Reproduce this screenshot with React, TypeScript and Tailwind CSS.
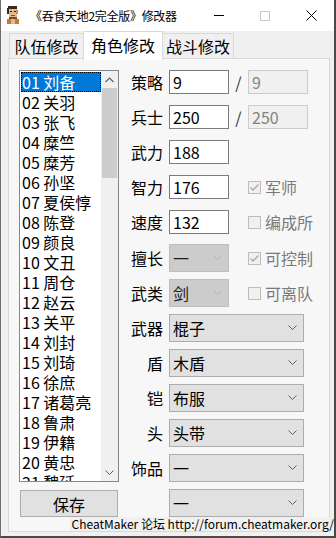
import React from "react";

const names = [
  "刘备", "关羽", "张飞", "糜竺", "糜芳", "孙坚", "夏侯惇", "陈登", "颜良", "文丑",
  "周仓", "赵云", "关平", "刘封", "刘琦", "徐庶", "诸葛亮", "鲁肃", "伊籍", "黄忠", "魏延",
];

const font = { fontFamily: "'Noto Sans CJK SC', 'Noto Sans', sans-serif" };

function Chevron({ light }: { light?: boolean }) {
  return (
    <svg width="9" height="6" viewBox="0 0 9 6" className="shrink-0">
      <path d="M0.5 0.5 L4.5 4.5 L8.5 0.5" fill="none" stroke={light ? "#b5b5b5" : "#5f5f5f"} strokeWidth="1" />
    </svg>
  );
}

function Label({ text }: { text: string }) {
  return <div className="w-[36px] text-right text-[16px] leading-[20px] text-black pr-[2px]">{text}</div>;
}

function TextBox({ value, disabled }: { value: string; disabled?: boolean }) {
  return (
    <div
      className={
        disabled
          ? "w-[60px] h-[24px] border border-[#cccccc] bg-[#f0f0f0] text-[#838383] text-[16px] leading-[22px] pl-[3px]"
          : "w-[60px] h-[24px] border border-[#7a7a7a] bg-white text-black text-[16px] leading-[22px] pl-[3px]"
      }
    >
      {value}
    </div>
  );
}

function Select({ value, disabled, wide }: { value: string; disabled?: boolean; wide?: boolean }) {
  return (
    <div
      className={
        (wide ? "w-[135px] " : "w-[60px] ") +
        (disabled
          ? "h-[28px] -mt-px border border-[#bfbfbf] bg-[#cccccc] flex items-center justify-between pl-[3px] pr-[6px] text-[16px] leading-[20px] text-[#1a1a1a]"
          : "h-[28px] -mt-px border border-[#adadad] bg-[#e1e1e1] flex items-center justify-between pl-[3px] pr-[6px] text-[16px] leading-[20px] text-black")
      }
    >
      <span>{value}</span>
      <Chevron light={disabled} />
    </div>
  );
}

function Check({ checked, text }: { checked?: boolean; text: string }) {
  return (
    <div className="flex items-center gap-[4px] ml-[15px]">
      <div className="w-[13px] h-[13px] border border-[#bcbcbc] bg-[#f0f0f0] flex items-center justify-center">
        {checked && (
          <svg width="11" height="11" viewBox="0 0 11 11">
            <path d="M1.5 5.5 L4 8 L9.5 2.5" fill="none" stroke="#a8a8a8" strokeWidth="1.3" />
          </svg>
        )}
      </div>
      <span className="text-[16px] leading-[20px] text-[#7a7a7a]">{text}</span>
    </div>
  );
}

function Row({ children }: { children: React.ReactNode }) {
  return <div className="h-[35px] flex items-start gap-[4px]">{children}</div>;
}

function Center({ h, children }: { h: number; children: React.ReactNode }) {
  return (
    <div className={h === 24 ? "h-[24px] flex items-center" : "h-[26px] flex items-center"}>{children}</div>
  );
}

function Icon() {
  return (
    <svg width="16" height="18" viewBox="0 0 16 18" shapeRendering="crispEdges">
      <rect x="3" y="0" width="9" height="3" fill="#3b2a1a" />
      <rect x="2" y="2" width="3" height="6" fill="#3b2a1a" />
      <rect x="4" y="3" width="8" height="8" fill="#e7b98a" />
      <rect x="5" y="5" width="2" height="1" fill="#2a1a0e" />
      <rect x="9" y="5" width="2" height="1" fill="#2a1a0e" />
      <rect x="6" y="9" width="4" height="1" fill="#8a4a2a" />
      <rect x="4" y="11" width="8" height="2" fill="#7a4a26" />
      <rect x="2" y="13" width="12" height="5" fill="#c07a3a" />
      <rect x="6" y="13" width="4" height="5" fill="#e7b98a" />
      <rect x="11" y="4" width="2" height="4" fill="#c98d5c" />
    </svg>
  );
}

export default function App() {
  return (
    <div
      className="relative w-[336px] h-[538px] bg-[#f0f0f0] border-l border-l-[#6e6e6e] border-r-2 border-r-[#4a4a4a] border-b-2 border-b-[#4a4a4a] overflow-hidden"
      style={font}
    >
      {/* Title bar */}
      <div className="h-[31px] bg-white flex items-center">
        <div className="ml-[4px] mt-[-2px]">
          <Icon />
        </div>
        <div className="ml-[9px] text-[12px] leading-[16px] text-black tracking-[-0.3px]">《吞食天地2完全版》修改器</div>
        <div className="flex-1" />
        <div className="w-[46px] h-[31px] flex items-center justify-center">
          <div className="w-[10px] h-px bg-black" />
        </div>
        <div className="w-[46px] h-[31px] flex items-center justify-center">
          <div className="w-[10px] h-[10px] border border-[#c6c6c6]" />
        </div>
        <div className="w-[46px] h-[31px] flex items-center justify-center">
          <svg width="11" height="11" viewBox="0 0 11 11">
            <path d="M0.5 0.5 L10.5 10.5 M10.5 0.5 L0.5 10.5" stroke="#000" strokeWidth="1" />
          </svg>
        </div>
      </div>

      {/* Tabs */}
      <div className="relative h-[27px] ml-[7px] flex items-end">
        <div className="h-[25px] w-[75px] ml-[1px] border border-[#d9d9d9] border-b-0 bg-[#f0f0f0] flex items-center justify-center text-[16px] leading-[20px] text-black">
          队伍修改
        </div>
        <div className="relative z-10 h-[29px] -mb-[2px] w-[80px] -ml-px border border-[#d9d9d9] border-b-0 bg-white flex items-center justify-center text-[16px] leading-[20px] text-black pb-[2px]">
          角色修改
        </div>
        <div className="h-[25px] w-[72px] -ml-px border border-[#d9d9d9] border-b-0 bg-[#f0f0f0] flex items-center justify-center text-[16px] leading-[20px] text-black">
          战斗修改
        </div>
      </div>

      {/* Panel */}
      <div className="ml-[7px] w-[322px] h-[474px] border border-[#d9d9d9] bg-[#f7f7f7] flex pl-[10px] pt-[11px]">
        {/* Left column */}
        <div className="flex flex-col w-[100px]">
          <div className="h-[412px] w-[100px] border border-[#828790] bg-white flex overflow-hidden">
            <div className="w-[81px] pt-px overflow-hidden">
              {names.map((n, i) => {
                const num = String(i + 1).padStart(2, "0");
                const sel = i === 0;
                return (
                  <div
                    key={num}
                    className={
                      sel
                        ? "h-[20px] ml-px bg-[#0078d7] text-white text-[16px] leading-[20px] pl-px outline-1 outline-dotted outline-[#000] -outline-offset-1 whitespace-nowrap"
                        : "h-[20px] ml-px text-black text-[16px] leading-[20px] pl-px whitespace-nowrap"
                    }
                  >
                    {num} {n}
                  </div>
                );
              })}
            </div>
            <div className="w-[17px] bg-[#f0f0f0] flex flex-col items-center">
              <div className="h-[17px] w-[17px] flex items-center justify-center">
                <svg width="9" height="6" viewBox="0 0 9 6">
                  <path d="M0.5 5 L4.5 1 L8.5 5" fill="none" stroke="#606060" strokeWidth="1.2" />
                </svg>
              </div>
              <div className="w-[15px] h-[90px] bg-[#cdcdcd]" />
              <div className="flex-1" />
              <div className="h-[17px] w-[17px] flex items-center justify-center">
                <Chevron />
              </div>
            </div>
          </div>
          <div className="mt-[8px] ml-px w-[98px] h-[27px] border border-[#adadad] bg-[#e1e1e1] flex items-center justify-center text-[16px] leading-[20px] text-black">
            保存
          </div>
        </div>

        {/* Right column */}
        <div className="ml-[10px] flex flex-col">
          <Row>
            <Center h={24}><Label text="策略" /></Center>
            <TextBox value="9" />
            <div className="w-[11px] h-[24px] flex items-center justify-center text-[16px] text-[#333]">/</div>
            <TextBox value="9" disabled />
          </Row>
          <Row>
            <Center h={24}><Label text="兵士" /></Center>
            <TextBox value="250" />
            <div className="w-[11px] h-[24px] flex items-center justify-center text-[16px] text-[#333]">/</div>
            <TextBox value="250" disabled />
          </Row>
          <Row>
            <Center h={24}><Label text="武力" /></Center>
            <TextBox value="188" />
          </Row>
          <Row>
            <Center h={24}><Label text="智力" /></Center>
            <TextBox value="176" />
            <Center h={24}><Check checked text="军师" /></Center>
          </Row>
          <Row>
            <Center h={24}><Label text="速度" /></Center>
            <TextBox value="132" />
            <Center h={24}><Check text="编成所" /></Center>
          </Row>
          <Row>
            <Center h={26}><Label text="擅长" /></Center>
            <Select value="一" disabled />
            <Center h={26}><Check checked text="可控制" /></Center>
          </Row>
          <Row>
            <Center h={26}><Label text="武类" /></Center>
            <Select value="剑" disabled />
            <Center h={26}><Check text="可离队" /></Center>
          </Row>
          <Row>
            <Center h={26}><Label text="武器" /></Center>
            <Select value="棍子" wide />
          </Row>
          <Row>
            <Center h={26}><Label text="盾" /></Center>
            <Select value="木盾" wide />
          </Row>
          <Row>
            <Center h={26}><Label text="铠" /></Center>
            <Select value="布服" wide />
          </Row>
          <Row>
            <Center h={26}><Label text="头" /></Center>
            <Select value="头带" wide />
          </Row>
          <Row>
            <Center h={26}><Label text="饰品" /></Center>
            <Select value="一" wide />
          </Row>
          <Row>
            <Center h={26}><Label text="" /></Center>
            <Select value="一" wide />
          </Row>
        </div>
      </div>

      {/* Footer link label */}
      <div className="absolute right-0 bottom-[5px] bg-[#f0f0f0] pl-[2px] text-[12px] leading-[14px] text-black whitespace-nowrap">
        CheatMaker 论坛 http://forum.cheatmaker.org/
      </div>
    </div>
  );
}
